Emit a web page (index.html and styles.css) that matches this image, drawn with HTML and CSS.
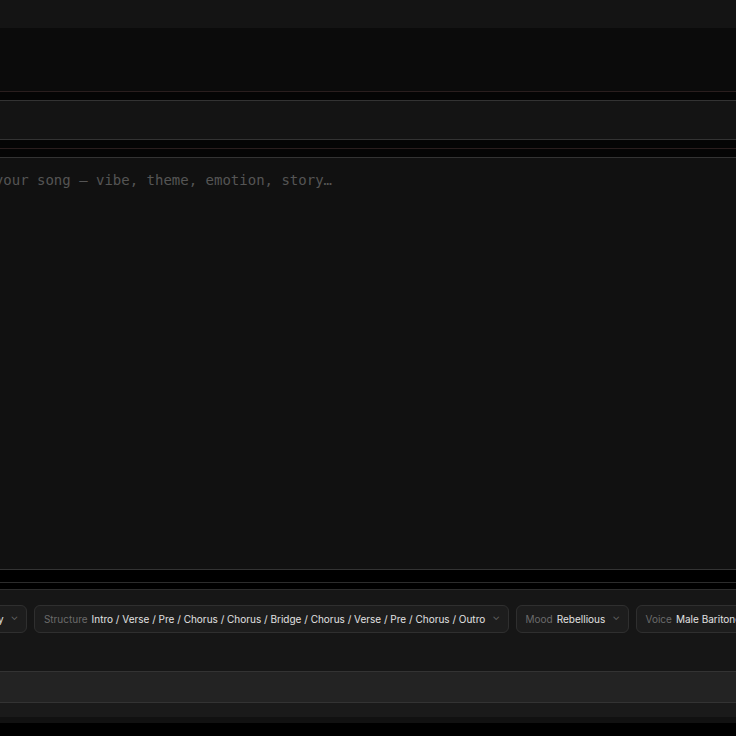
FILE: index.html
```html
<!DOCTYPE html>
<html lang="en">
<head>
<meta charset="UTF-8">
<meta name="viewport" content="width=device-width, initial-scale=1.0">
<title>Song Writer</title>
<link rel="stylesheet" href="styles.css">
</head>
<body>
    <div class="app">
        <div class="topbar"></div>
        <div class="hero"></div>

        <div class="band">
            <div class="title-field"></div>
        </div>

        <div class="band band-editor">
            <textarea class="prompt" placeholder="Describe your song — vibe, theme, emotion, story…"></textarea>
        </div>

        <div class="band band-gap"></div>

        <div class="options">
            <div class="chips">
                <button type="button" class="chip"><span class="chip-label">Genre</span><span class="chip-value">Country</span><span class="chev">&#8964;</span></button>
                <button type="button" class="chip"><span class="chip-label">Structure</span><span class="chip-value">Intro / Verse / Pre / Chorus / Chorus / Bridge / Chorus / Verse / Pre / Chorus / Outro</span><span class="chev">&#8964;</span></button>
                <button type="button" class="chip"><span class="chip-label">Mood</span><span class="chip-value">Rebellious</span><span class="chev">&#8964;</span></button>
                <button type="button" class="chip"><span class="chip-label">Voice</span><span class="chip-value">Male Baritone</span><span class="chev">&#8964;</span></button>
            </div>
            <div class="generate-bar"></div>
        </div>

        <div class="footer"></div>
    </div>
</body>
</html>
```

FILE: styles.css
```css
body {
    margin: 0;
    padding: 0;
    background-color: #000;
    font-family: Inter, "Noto Sans", sans-serif;
    overflow: hidden;
}

.app {
    width: 1200px;
    margin-left: -100px;
}

.topbar {
    height: 28px;
    background-color: #141414;
}

.hero {
    height: 63px;
    background-color: #0b0b0b;
    border-bottom: 1px solid #2a1e1e;
}

.band {
    background-color: #050505;
    padding: 8px 0;
}

.title-field {
    height: 38px;
    background-color: #141414;
    border-top: 1px solid #333;
    border-bottom: 1px solid #333;
}

.band-editor {
    padding: 0;
    border-top: 1px solid #2a1e1e;
    padding-top: 8px;
}

.prompt {
    display: block;
    box-sizing: border-box;
    width: 100%;
    height: 413px;
    margin: 0;
    padding: 13px 0 0 19px;
    background-color: #111;
    color: #ccc;
    border: none;
    border-top: 1px solid #333;
    border-bottom: 1px solid #333;
    font-family: "DejaVu Sans Mono", monospace;
    font-size: 14px;
    line-height: 18px;
    resize: none;
    outline: none;
}

.prompt::placeholder {
    color: #555;
}

.band-gap {
    height: 12px;
    padding: 0;
    background-color: #000;
    border-bottom: 1px solid #2c2c2c;
}

.options {
    margin-top: 6px;
    border-top: 1px solid #2c2c2c;
    background-color: #161616;
    padding-top: 15px;
}

.chips {
    display: flex;
    gap: 6.5px;
    padding-left: 23px;
}

.chip {
    display: flex;
    align-items: center;
    gap: 4px;
    height: 28px;
    padding: 0 8px 0 9px;
    background-color: #1d1d1d;
    border: 1px solid #2f2f2f;
    border-radius: 6px;
    font-family: Inter, "Noto Sans", sans-serif;
    font-size: 10px;
    white-space: nowrap;
    cursor: pointer;
}

.chip-label {
    color: #6b6b6b;
}

.chip-value {
    color: #e2e2e2;
}

.chev {
    color: #6b6b6b;
    font-size: 10px;
    margin-left: 3px;
    line-height: 1;
    position: relative;
    top: -3px;
}

.generate-bar {
    margin-top: 38px;
    height: 30px;
    background-color: #232323;
    border-top: 1px solid #333;
    border-bottom: 1px solid #333;
}

.footer {
    height: 14px;
    background-color: #1a1a1a;
    border-bottom: 6px solid #111;
    box-shadow: 0 1px 0 #222;
}
```
